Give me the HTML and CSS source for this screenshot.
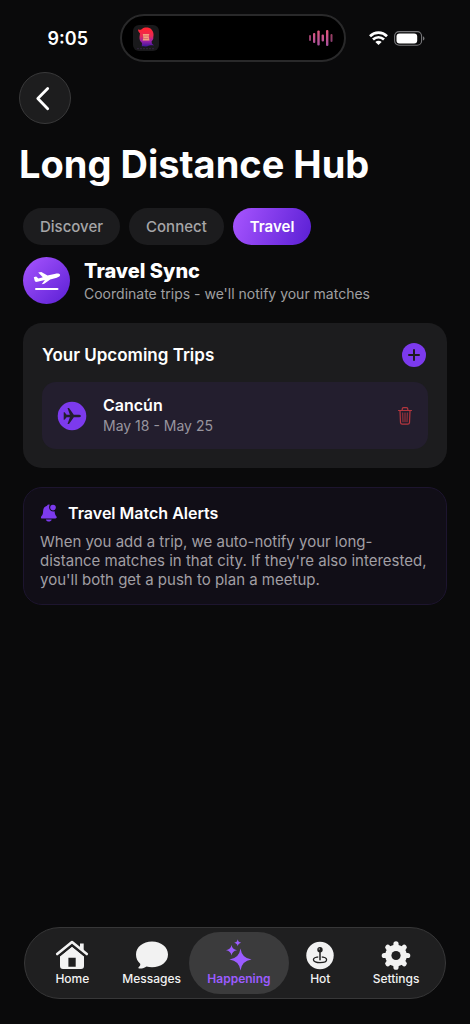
FILE: index.html
```html
<!DOCTYPE html>
<html lang="en">
<head>
<meta charset="utf-8">
<meta name="viewport" content="width=device-width, initial-scale=1">
<title>Long Distance Hub</title>
<link rel="stylesheet" href="styles.css">
</head>
<body>
<div class="status">
  <time class="clock">9:05</time>
  <div class="island">
    <svg class="cover" viewBox="0 0 26 26" aria-hidden="true">
      <defs><linearGradient id="face" x1="0" y1="0" x2="0" y2="1"><stop offset="0.1" stop-color="#ff2434"/><stop offset="0.45" stop-color="#e82a55"/><stop offset="0.7" stop-color="#a022a8"/><stop offset="1" stop-color="#3c1699"/></linearGradient></defs>
      <rect width="26" height="26" rx="6" fill="#19191b"/>
      <path d="M5 4.300C6.500 5.200 7.700 5 9 3.900C11.500 1.900 16.500 2.200 18.500 4.500C20.500 6.500 20.900 9.500 20.300 12C20.600 14 19.600 15.500 18.600 16.300L18.900 18.500L21 20.500C17.500 20 16.500 20.800 14.500 21.200C12 21.700 10 21.200 8.800 21.400L9 18C7.200 16.500 6.300 14.500 6.500 12L7 8.300C5.800 7.500 5 6 5 4.300Z" fill="url(#face)"/>
      <path d="M9.800 9h6.600l-.8 2 .9 4.500H9.600l.8-2.500z" fill="#f3a27c"/>
      <path d="M10.300 11h5M10.300 13.500h5" stroke="#d4566a" stroke-width=".7"/>
      <path d="M4 23.700h18" stroke="#3a2947" stroke-width=".8" stroke-dasharray="2 1"/>
    </svg>
    <svg class="wave" viewBox="0 0 24 16" aria-hidden="true">
      <defs><linearGradient id="sound" x1="0" y1="0" x2="0" y2="16" gradientUnits="userSpaceOnUse"><stop offset="0" stop-color="#e35679"/><stop offset="1" stop-color="#a6509f"/></linearGradient></defs>
      <g fill="url(#sound)"><rect x="0" y="5" width="2" height="6" rx="1" opacity=".75"/><rect x="4" y="3" width="2.300" height="10" rx="1"/><rect x="8.300" y="0.500" width="2.400" height="15" rx="1"/><rect x="12.600" y="4.500" width="2.400" height="7" rx="1"/><rect x="17" y="0" width="2.400" height="16" rx="1"/><rect x="21.500" y="4" width="2" height="8" rx="1" opacity=".75"/></g>
    </svg>
  </div>
  <div class="signals">
    <svg class="wifi" viewBox="0 0 19 14" aria-hidden="true"><g fill="none" stroke="#fff" stroke-width="2.700"><path d="M1 5.200C5.800.5 13.200.5 18 5.200"/><path d="M4 8.500c3.200-3 7.800-3 11 0"/></g><path d="M9.500 14L6.300 10.900c1.800-1.500 4.600-1.500 6.400 0z" fill="#fff"/></svg>
    <svg class="battery" viewBox="0 0 31 15" aria-hidden="true"><rect x=".6" y=".6" width="27" height="13.600" rx="4.500" fill="none" stroke="#77777a" stroke-width="1.100"/><rect x="2.500" y="2.400" width="20.700" height="10" rx="3" fill="#fff"/><path d="M29 5.300c2 .8 2 3.500 0 4.300z" fill="#77777a"/></svg>
  </div>
</div>

<header class="header">
  <button class="back" type="button" aria-label="Back"><svg viewBox="0 0 24 24" aria-hidden="true"><path d="M14.700 2.500L4.800 12.500l9.900 10.200" fill="none" stroke="#fff" stroke-width="2.800" stroke-linecap="round" stroke-linejoin="round"/></svg></button>
  <h1 class="page-title">Long Distance Hub</h1>
</header>

<main class="content">
  <div class="tabs">
    <button class="tab" type="button">Discover</button>
    <button class="tab" type="button">Connect</button>
    <button class="tab tab-active" type="button">Travel</button>
  </div>

  <section class="intro">
    <span class="intro-icon"><svg viewBox="0 0 28 22" aria-hidden="true"><path d="M5.200 2.500L8.300 2l6.200 3.600 8.100-1.900c2-.4 4.300.1 4.500 1.100.3 1.200-1.300 2.200-3.300 2.900l-6.600 1.800-6 4.300-2.500.4 3.200-4.200-7.600 1.800c-1.100.3-1.800.1-2.500-.7L.8 7.200l2.300-.6L5.500 8.400l4.300-1.200z" fill="#fff"/><rect x="2" y="17.900" width="23.500" height="2.200" rx="1.100" fill="#fff"/></svg></span>
    <div>
      <h2 class="intro-title">Travel Sync</h2>
      <p class="intro-text">Coordinate trips - we'll notify your matches</p>
    </div>
  </section>

  <section class="trips">
    <div class="trips-head">
      <h3 class="trips-title">Your Upcoming Trips</h3>
      <button class="icon-button" type="button" aria-label="Add trip"><svg class="plus" viewBox="0 0 24 24" aria-hidden="true"><circle cx="12" cy="12" r="12" fill="#7c3aed"/><path d="M12 7v10M7 12h10" stroke="#1d1b20" stroke-width="2" stroke-linecap="round"/></svg></button>
    </div>
    <article class="trip">
      <svg class="plane" viewBox="0 0 30 30" aria-hidden="true"><circle cx="15" cy="15" r="14.300" fill="#7c3aed"/><path d="M24 15c0-.8-1.400-1.300-2.800-1.300h-4.400L12.400 7.400c-.3-.4-.6-.5-1-.5h-.9l2.400 6.800H9.600L8 11.700c-.2-.3-.4-.4-.7-.4h-.6V18.700h.6c.3 0 .5-.1.700-.4l1.600-2h3.300l-2.400 6.800h.9c.4 0 .7-.1 1-.5l4.400-6.300h4.400c1.400 0 2.800-.5 2.800-1.300z" fill="#231e2e"/></svg>
      <div class="trip-info">
        <h4 class="trip-city">Cancún</h4>
        <p class="trip-dates">May 18 - May 25</p>
      </div>
      <button class="icon-button" type="button" aria-label="Delete trip"><svg class="trash" viewBox="0 0 16 20" aria-hidden="true"><g fill="none" stroke="#b5363e" stroke-width="1.200" stroke-linecap="round" stroke-linejoin="round"><path d="M1.500 4.500h13M5.200 4.300V3c0-.9.500-1.400 1.400-1.400h2.800c.9 0 1.400.5 1.400 1.400v1.300M3 4.700l.5 11.900c.1 1 .7 1.600 1.700 1.600h5.600c1 0 1.600-.6 1.700-1.600L13 4.700"/><path d="M5.700 7l.3 8.700M8 7v8.700M10.300 7l-.3 8.700" stroke-width=".9"/></g></svg></button>
    </article>
  </section>

  <section class="alert">
    <div class="alert-head">
      <svg class="bell" viewBox="0 0 18 18" aria-hidden="true"><g fill="#7c3aed"><path d="M9.700.7C8.400.4 7.500.7 7 1.700 4.300 2.500 3.200 4.500 3.100 7.300 3 10 2.600 10.800 1.400 12.200.6 13.200.8 14.500 2.200 14.500h13.200c1.400 0 1.700-1.300.9-2.300-1.100-1.400-1.600-2.500-1.700-4.900-3.400 1.200-6.900-2.200-4.900-6.600z"/><circle cx="13" cy="3.600" r="2.800"/><path d="M5.900 15.500h5.800c-.6 2.700-5.200 2.700-5.800 0z"/></g></svg>
      <h3 class="alert-title">Travel Match Alerts</h3>
    </div>
    <p class="alert-text">When you add a trip, we auto-notify your long-distance matches in that city. If they're also interested, you'll both get a push to plan a meetup.</p>
  </section>
</main>

<nav class="nav" aria-label="Main">
  <a class="nav-item" href="#home"><svg viewBox="0 0 34 30" aria-hidden="true"><path d="M25 3.500h3.700v8L25 8.500z" fill="#f2f2f2"/><path fill-rule="evenodd" d="M17 6.500l12 9.800V26c0 2-1 3-3 3H8c-2 0-3-1-3-3V16.300zM13.400 17.800v9h7.300v-9z" fill="#f2f2f2"/><path d="M2.500 16.800L17 5l14.500 11.800" fill="none" stroke="#1f1f20" stroke-width="2.500"/><path d="M2.200 14L17 2l14.800 12" fill="none" stroke="#f2f2f2" stroke-width="2.600" stroke-linecap="round" stroke-linejoin="round"/></svg><span>Home</span></a>
  <a class="nav-item" href="#messages"><svg viewBox="0 0 34 30" aria-hidden="true"><path d="M17 1.500C26 1.500 33 7 33 14.500S26 27.300 17 27.300c-2 0-3.900-.2-5.500-.8-1.800 1.400-4.600 2.300-7.500 2-.8-.1-.8-.8-.2-1.400 1.200-1 1.700-2.200 1.400-3.400C2.500 21.500 1 18.300 1 14.500 1 7 8 1.500 17 1.500z" fill="#f2f2f2"/></svg><span>Messages</span></a>
  <a class="nav-item nav-item-active" href="#happening" aria-current="page"><svg viewBox="0 0 34 30" aria-hidden="true"><g fill="#9b5cff"><path d="M18.500 8.500Q19.800 18.200 29.500 19.500Q19.800 20.800 18.500 30.500Q17.200 20.800 7.500 19.500Q17.200 18.200 18.500 8.500z"/><path d="M9.500 5Q10.200 9.500 15 10.200Q10.200 10.900 9.500 15.500Q8.800 10.900 4 10.200Q8.800 9.500 9.500 5z"/><path d="M15.700-.8Q16.100 2.200 19.200 2.700Q16.100 3.200 15.700 6.200Q15.300 3.200 12.200 2.700Q15.300 2.200 15.700-.8z"/></g></svg><span>Happening</span></a>
  <a class="nav-item" href="#hot"><svg viewBox="0 0 34 30" aria-hidden="true"><circle cx="17" cy="15.500" r="13.700" fill="#f2f2f2"/><ellipse cx="17" cy="19.800" rx="6.600" ry="2.900" fill="none" stroke="#202020" stroke-width="1.300"/><path d="M17 10v9.700" stroke="#f2f2f2" stroke-width="3.500"/><path d="M17 10v9.800" stroke="#202020" stroke-width="1.500" stroke-linecap="round"/><circle cx="17" cy="9.700" r="2.700" fill="#202020"/><circle cx="16.300" cy="9" r=".8" fill="#999"/></svg><span>Hot</span></a>
  <a class="nav-item" href="#settings"><svg viewBox="0 0 34 30" aria-hidden="true"><g fill="none" stroke="#f2f2f2"><circle cx="17" cy="15.500" r="7.600" stroke-width="6.400"/><path d="M17 3.800v23.400M5.300 15.500h23.400M8.800 7.300l16.400 16.400M25.200 7.300L8.800 23.700" stroke-width="5.200" stroke-linecap="round"/></g><circle cx="17" cy="15.500" r="4.600" fill="#1f1f20"/></svg><span>Settings</span></a>
</nav>
</body>
</html>
```

FILE: styles.css
```css
* { box-sizing: border-box; }

body {
  margin: 0;
  min-height: 100vh;
  display: flex;
  flex-direction: column;
  background: #0a0a0b;
  color: #fff;
  font-family: Inter, "Liberation Sans", sans-serif;
}

h1, h2, h3, h4, p { margin: 0; }
svg { display: block; flex: none; overflow: visible; }
button { border: 0; padding: 0; font: inherit; color: inherit; cursor: pointer; }

.status {
  display: grid;
  grid-template-columns: 1fr 226px 1fr;
  align-items: center;
  padding: 14px 5px 0 0;
}
.clock { padding: 2px 0 0 16px; text-align: center; font-size: 18px; line-height: 24px; font-weight: 600; }
.island {
  height: 48px;
  border: 2px solid #29292a;
  border-radius: 24px;
  background: #000;
  display: flex;
  align-items: center;
  justify-content: space-between;
  padding: 0 11px;
}
.cover { width: 26px; height: 26px; }
.wave { width: 24px; height: 16px; }
.signals { display: flex; align-items: center; justify-content: center; gap: 6px; padding-right: 17px; }
.wifi { width: 19px; height: 14px; }
.battery { width: 31px; height: 15px; }

.header { padding: 10px 19px 0; }
.back {
  width: 52px;
  height: 52px;
  border: 1px solid #39393a;
  border-radius: 50%;
  background: #1d1d1e;
  display: grid;
  place-items: center;
}
.back svg { width: 24px; height: 24px; }
.page-title { margin-top: 16px; font-size: 38px; line-height: 48px; font-weight: 700; }

.content { flex: 1; padding: 20px 23px; }
.tabs { display: flex; gap: 9px; }
.tab {
  padding: 0 17px;
  border-radius: 19px;
  background: #1c1c1e;
  color: #a6a6a8;
  font-size: 15px;
  line-height: 37px;
  font-weight: 500;
}
.tab-active { background: linear-gradient(110deg, #a855ff, #5a1fd4); color: #fff; font-weight: 600; }

.intro { display: flex; align-items: center; gap: 14px; margin-top: 12px; }
.intro-icon {
  width: 47px;
  height: 47px;
  flex: none;
  border-radius: 50%;
  background: linear-gradient(135deg, #a855ff, #5a1fd4);
  display: grid;
  place-items: center;
}
.intro-icon svg { width: 28px; height: 22px; }
.intro-title { font-size: 20px; line-height: 26px; font-weight: 800; }
.intro-text { font-size: 14px; line-height: 20px; color: #a0a0a2; }

.trips { margin-top: 19px; padding: 19px; border-radius: 19px; background: #1c1c1e; }
.trips-head { display: flex; align-items: center; justify-content: space-between; padding-right: 2px; }
.trips-title { font-size: 17px; line-height: 26px; font-weight: 600; }
.icon-button { background: none; }
.plus { width: 24px; height: 24px; }
.trip {
  display: flex;
  align-items: center;
  margin-top: 14px;
  padding: 13px 15px;
  border-radius: 14px;
  background: #231e2e;
}
.plane { width: 30px; height: 30px; }
.trip-info { flex: 1; padding-left: 16px; }
.trip-city { font-size: 16px; line-height: 21px; font-weight: 600; }
.trip-dates { font-size: 14px; line-height: 20px; color: #98959e; }
.trash { width: 16px; height: 20px; }

.alert {
  margin-top: 19px;
  padding: 14px 16px 15px;
  border: 1px solid #1d152f;
  border-radius: 19px;
  background: #110e17;
}
.alert-head { display: flex; align-items: center; gap: 10px; }
.bell { width: 18px; height: 18px; }
.alert-title { font-size: 16px; line-height: 22px; font-weight: 600; }
.alert-text { margin-top: 8px; font-size: 15px; line-height: 19px; color: #a19fa4; }

.nav {
  display: grid;
  grid-template-columns: 85fr 74fr 101fr 62fr 90fr;
  margin: 0 24px 25px;
  padding: 4px 4px 4px 5px;
  border: 1px solid #373738;
  border-radius: 37px;
  background: #1f1f20;
}
.nav-item {
  display: flex;
  flex-direction: column;
  align-items: center;
  padding: 8px 0 7px;
  border-radius: 32px;
  color: #f2f2f2;
  font-size: 12px;
  line-height: 17px;
  font-weight: 500;
  text-decoration: none;
}
.nav-item svg { width: 34px; height: 30px; }
.nav-item-active { background: #3b3b3c; color: #9b5cff; font-weight: 600; }
```
